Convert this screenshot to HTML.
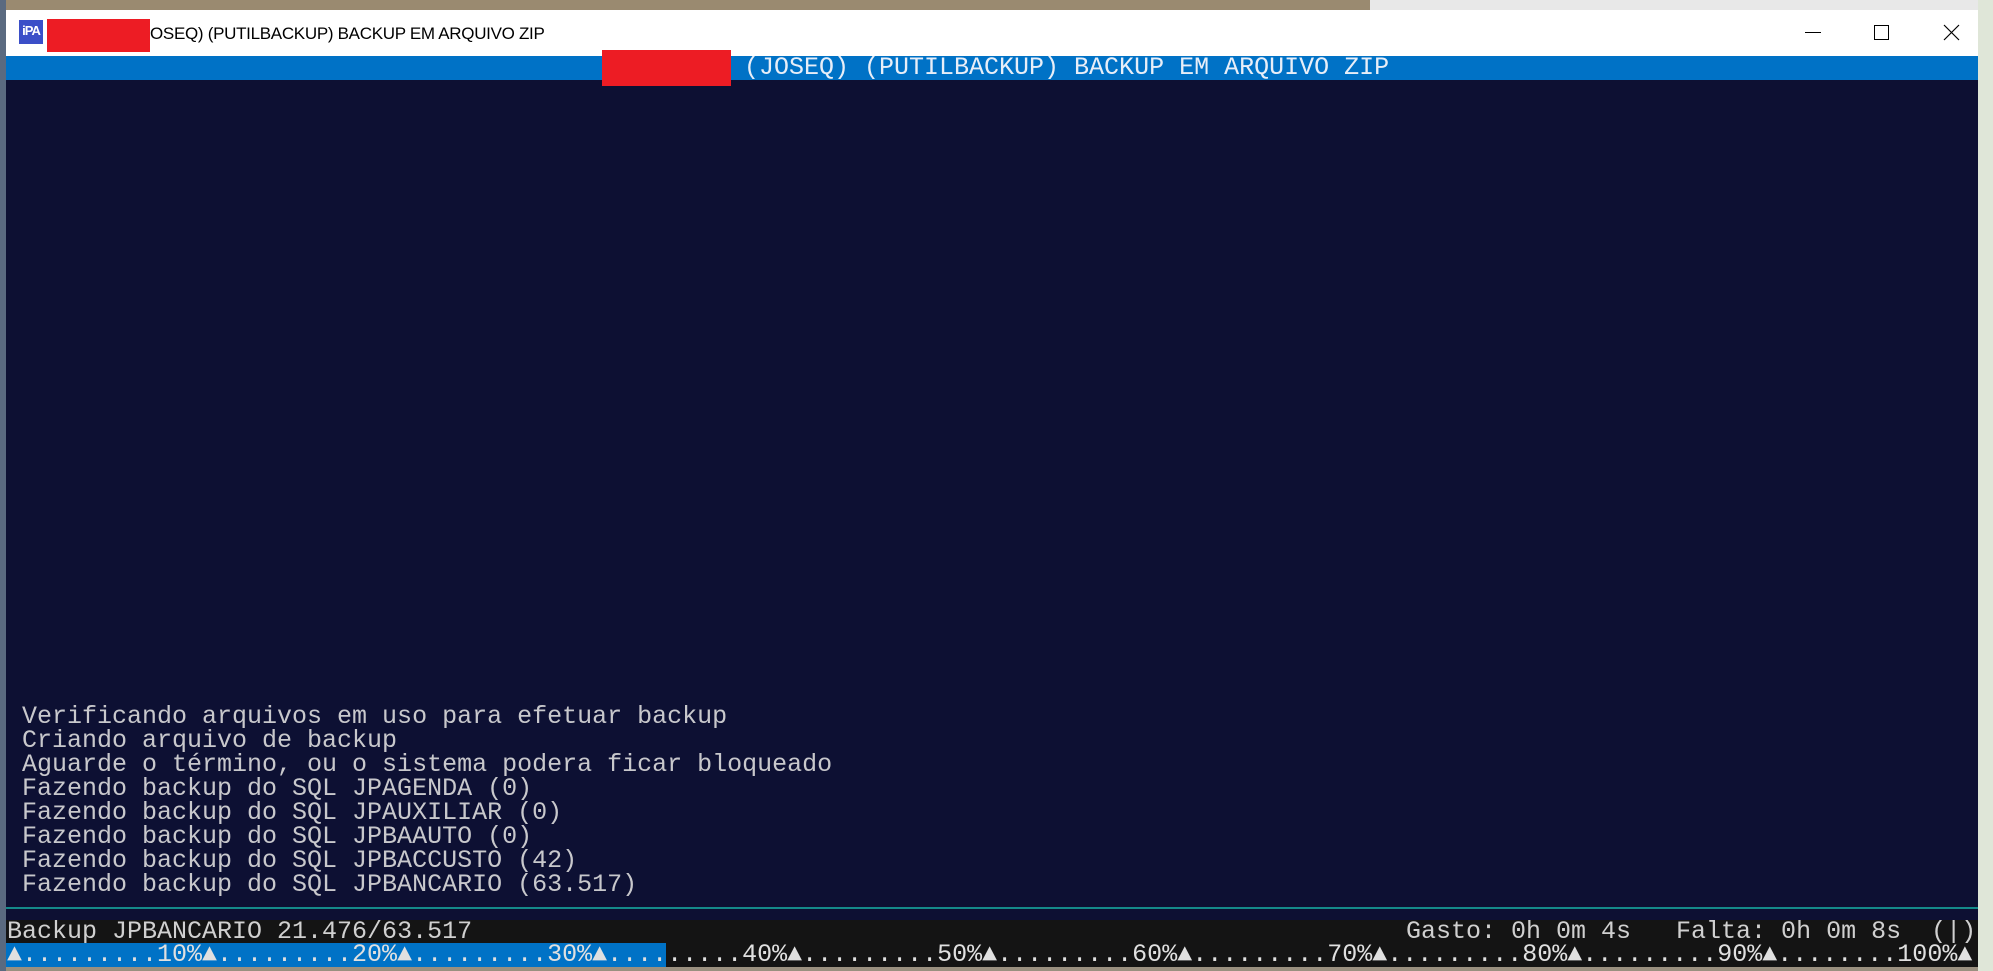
<!DOCTYPE html>
<html><head><meta charset="utf-8"><style>
html,body{margin:0;padding:0;}
body{width:1993px;height:971px;position:relative;overflow:hidden;background:#e6e6e6;font-family:"Liberation Sans",sans-serif;}
.abs{position:absolute;}
.mono{font-family:"Liberation Mono",monospace;font-size:25px;letter-spacing:0;white-space:pre;line-height:24px;}
</style></head><body>
<div class="abs" style="left:0;top:0;width:1370px;height:12px;background:#9a8a70"></div>
<div class="abs" style="left:1370px;top:0;width:623px;height:12px;background:#e8e8e8"></div>
<div class="abs" style="left:1978px;top:0;width:15px;height:971px;background:#dfe6d8"></div>
<div class="abs" style="left:0;top:0;width:6px;height:971px;background:#5a6a80"></div>
<div class="abs" style="left:6px;top:10px;width:1972px;height:961px;background:#0d1033;"></div>
<div class="abs" style="left:6px;top:10px;width:1972px;height:46px;background:#fff;"></div>
<div class="abs" style="left:19px;top:20px;width:24px;height:24px;background:#3b4fc8;color:#fff;font:bold 13px 'Liberation Sans',sans-serif;line-height:22px;text-align:center;letter-spacing:-1px">iPA</div>
<div class="abs" style="left:47px;top:19px;width:103px;height:33px;background:#ed1c24"></div>
<div class="abs" style="left:150px;top:20px;font-size:17px;line-height:28px;color:#000;white-space:pre;letter-spacing:-0.3px">OSEQ) (PUTILBACKUP) BACKUP EM ARQUIVO ZIP</div>
<div class="abs" style="left:1805px;top:32px;width:16px;height:1px;background:#000"></div>
<div class="abs" style="left:1874px;top:25px;width:13px;height:13px;border:1px solid #000"></div>
<svg class="abs" style="left:1943px;top:24px" width="17" height="17"><path d="M1 1L16 16M16 1L1 16" stroke="#000" stroke-width="1.2"/></svg>
<div class="abs" style="left:6px;top:56px;width:1972px;height:24px;background:#0072c6"></div>
<div class="abs" style="left:602px;top:50px;width:129px;height:36px;background:#ed1c24"></div>
<div class="abs mono" style="left:744px;top:56px;color:#e8eef8">(JOSEQ) (PUTILBACKUP) BACKUP EM ARQUIVO ZIP</div>
<div class="abs mono" style="left:22px;top:705px;color:#c8c8cc">Verificando arquivos em uso para efetuar backup
Criando arquivo de backup
Aguarde o término, ou o sistema podera ficar bloqueado
Fazendo backup do SQL JPAGENDA (0)
Fazendo backup do SQL JPAUXILIAR (0)
Fazendo backup do SQL JPBAAUTO (0)
Fazendo backup do SQL JPBACCUSTO (42)
Fazendo backup do SQL JPBANCARIO (63.517)</div>
<div class="abs" style="left:6px;top:907px;width:1972px;height:2px;background:#148a8a"></div>
<div class="abs" style="left:6px;top:920px;width:1972px;height:51px;background:#141414"></div>
<div class="abs mono" style="left:7px;top:920px;color:#d0d0d0">Backup JPBANCARIO 21.476/63.517</div>
<div class="abs mono" style="left:1406px;top:920px;color:#d0d0d0">Gasto: 0h 0m 4s   Falta: 0h 0m 8s  (|)</div>
<div class="abs" style="left:6px;top:943px;width:660px;height:24px;background:#0072c6"></div>
<div class="abs mono" style="left:7px;top:943px;color:#e0e0e0">▲.........10%▲.........20%▲.........30%▲.........40%▲.........50%▲.........60%▲.........70%▲.........80%▲.........90%▲........100%▲</div>
<div class="abs" style="left:6px;top:967px;width:1972px;height:4px;background:#9a9080"></div>
</body></html>
